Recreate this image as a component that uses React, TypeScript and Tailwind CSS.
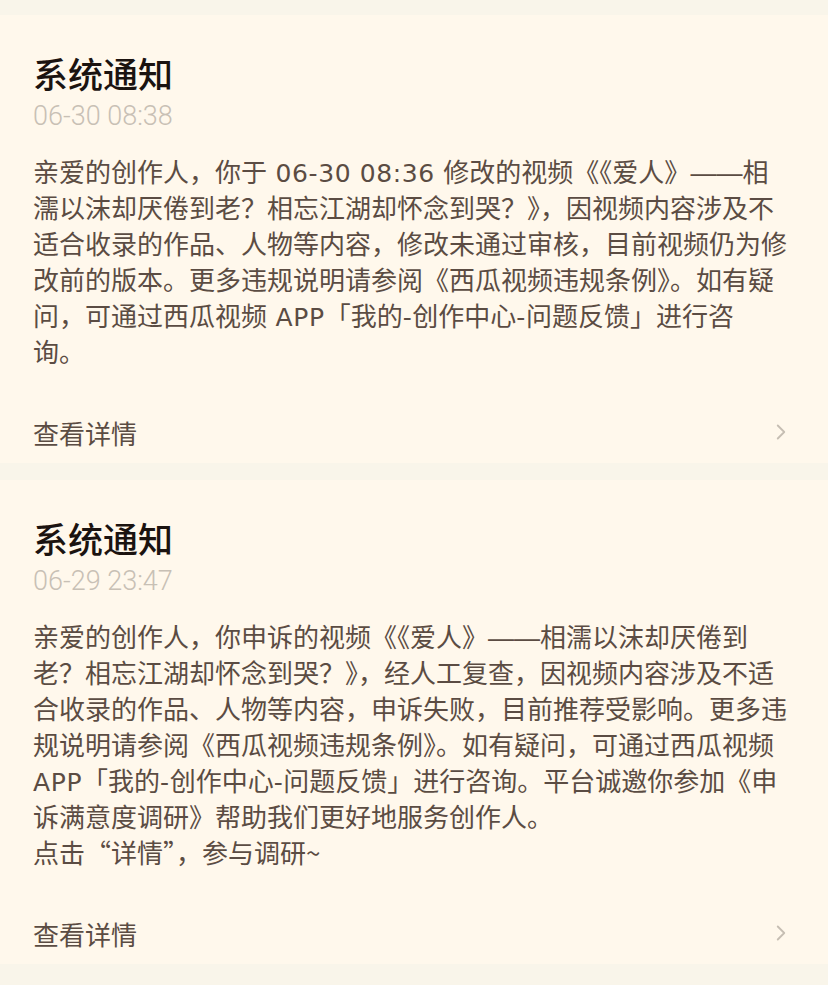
import { ChevronRight } from 'lucide-react';

type Notice = {
  title: string;
  time: string;
  lines: string[];
};

const notices: Notice[] = [
  {
    title: '系统通知',
    time: '06-30 08:38',
    lines: [
      '亲爱的创作人，你于 06-30 08:36 修改的视频《《爱人》——相',
      '濡以沫却厌倦到老？相忘江湖却怀念到哭？》，因视频内容涉及不',
      '适合收录的作品、人物等内容，修改未通过审核，目前视频仍为修',
      '改前的版本。更多违规说明请参阅《西瓜视频违规条例》。如有疑',
      '问，可通过西瓜视频 APP「我的-创作中心-问题反馈」进行咨',
      '询。',
    ],
  },
  {
    title: '系统通知',
    time: '06-29 23:47',
    lines: [
      '亲爱的创作人，你申诉的视频《《爱人》——相濡以沫却厌倦到',
      '老？相忘江湖却怀念到哭？》，经人工复查，因视频内容涉及不适',
      '合收录的作品、人物等内容，申诉失败，目前推荐受影响。更多违',
      '规说明请参阅《西瓜视频违规条例》。如有疑问，可通过西瓜视频',
      'APP「我的-创作中心-问题反馈」进行咨询。平台诚邀你参加《申',
      '诉满意度调研》帮助我们更好地服务创作人。',
      '点击“详情”，参与调研~',
    ],
  },
];

// latin runs are wider in the original font, so give them their own face
function Line({ text }: { text: string }) {
  const parts = text.split(/([A-Za-z0-9:\- ]+|—+)/);
  return (
    <div className="flex h-[36px] items-baseline whitespace-pre">
      {parts.map((p, i) => {
        if (!p) return null;
        if (/^—+$/.test(p))
          return (
            <span key={i} className="font-['Liberation_Sans',sans-serif] leading-[36px]">
              {p}
            </span>
          );
        if (/^[A-Za-z0-9:\- ]+$/.test(p))
          return (
            <span key={i} className="font-['DejaVu_Sans',sans-serif] text-[25px] leading-[36px] tracking-[0.6px]">
              {p}
            </span>
          );
        return (
          <span key={i} className="leading-[36px]">
            {p}
          </span>
        );
      })}
    </div>
  );
}

function NoticeCard({ n }: { n: Notice }) {
  return (
    <div className="bg-[#fff8ec] pl-[33px] pr-[40px] pt-[36px] pb-[11px]">
      <h2 className="text-[35px] leading-[44px] font-medium text-[#1b1310]">{n.title}</h2>
      <p className="text-[27px] leading-[42px] text-[#c8c0b5] font-['Roboto',sans-serif] font-light">{n.time}</p>
      <div className="mt-[16px] text-[26px] text-[#5b4c43]">
        {n.lines.map((l, i) => (
          <Line key={i} text={l} />
        ))}
      </div>
      <div className="mt-[43px] flex h-[40px] items-center justify-between">
        <span className="text-[26px] text-[#5b4c43]">查看详情</span>
        <ChevronRight className="mr-[-6px] h-[26px] w-[26px] text-[#c6beb3]" strokeWidth={1.7} />
      </div>
    </div>
  );
}

export default function App() {
  return (
    <div className="min-h-[985px] w-[828px] overflow-hidden bg-[#f9f5ea] pt-[15px] font-['Noto_Sans_CJK_SC','Noto_Sans',sans-serif]">
      <div className="flex flex-col gap-[17px]">
        {notices.map((n, i) => (
          <NoticeCard key={i} n={n} />
        ))}
      </div>
    </div>
  );
}
